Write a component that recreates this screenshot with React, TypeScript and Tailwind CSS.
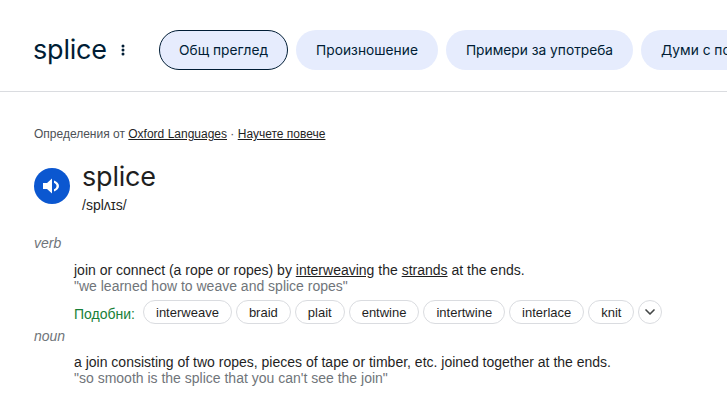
import { ChevronDown } from "lucide-react";

const tabs = ["Общ преглед", "Произношение", "Примери за употреба", "Думи с подобно значение"];
const synonyms = ["interweave", "braid", "plait", "entwine", "intertwine", "interlace", "knit"];

export default function App() {
  return (
    <div className="h-[408px] w-[727px] overflow-hidden bg-white font-['Liberation_Sans',sans-serif] text-[14px] text-[#1f1f1f]">
      {/* Header */}
      <div className="flex h-[92px] items-start border-b border-[#dadce0] pt-[30px] pl-[34px]">
        <div className="-ml-px flex h-10 w-[73px] shrink-0 items-center font-['Inter',sans-serif] text-[27px] tracking-[-0.2px] text-[#001d35]">
          splice
        </div>
        <div className="flex h-10 w-[53px] shrink-0 items-center pl-[15px]">
          <svg width="4" height="12" viewBox="0 0 4 12" fill="#001d35">
            <circle cx="2" cy="2" r="1.5" />
            <circle cx="2" cy="6" r="1.5" />
            <circle cx="2" cy="10" r="1.5" />
          </svg>
        </div>
        <div className="flex shrink-0 gap-2">
          {tabs.map((tab, i) => (
            <div
              key={tab}
              className={`flex h-10 items-center whitespace-nowrap rounded-[20px] bg-[#e6ecfd] font-['Inter',sans-serif] text-[13.75px] text-[#001d35] ${
                i === 0 ? "border border-[#001d35] px-[19px]" : "px-5"
              }`}
            >
              {tab}
            </div>
          ))}
        </div>
      </div>

      {/* Content */}
      <div className="pl-[34px]">
        <div className="mt-[34px] text-[12px] leading-4 text-[#4d5156]">
          Определения от <span className="text-[#1f1f1f] underline">Oxford Languages</span> ·{" "}
          <span className="text-[#1f1f1f] underline">Научете повече</span>
        </div>

        <div className="mt-[17px] flex">
          <div className="mt-[9px] flex h-9 w-9 items-center justify-center rounded-full bg-[#0b57d0]">
            <svg width="24" height="24" viewBox="0 0 24 24" fill="white">
              <path d="M3 9v6h4l5 4.500V4.500L7 9H3z" />
              <path d="M14 6.500c2.900 1 5 3 5 5.500s-2.100 4.500-5 5.500v-2.200c1.600-.8 2.500-1.800 2.500-3.300s-.9-2.500-2.500-3.300z" />
            </svg>
          </div>
          <div className="ml-3">
            <div className="h-9 font-['Inter',sans-serif] text-[27px] leading-9 tracking-[-0.2px]">splice</div>
            <div className="leading-5">/splʌɪs/</div>
          </div>
        </div>

        <div className="mt-5 leading-4 text-[#70757a] italic">verb</div>

        <div className="mt-[11px] pl-10">
          <div className="leading-4">
            join or connect (a rope or ropes) by <span className="underline">interweaving</span> the{" "}
            <span className="underline">strands</span> at the ends.
          </div>
          <div className="leading-4 text-[#70757a]">"we learned how to weave and splice ropes"</div>
          <div className="mt-[6px] flex items-center">
            <span className="w-[69px] shrink-0 pt-1 leading-5 text-[#188038]">Подобни:</span>
            <div className="flex gap-1">
              {synonyms.map((word) => (
                <div
                  key={word}
                  className="flex h-6 items-center rounded-full border border-[#dadce0] px-3 pt-px text-[13px] text-[#1f1f1f]"
                >
                  {word}
                </div>
              ))}
              <div className="flex h-6 w-6 items-center justify-center rounded-full border border-[#dadce0] text-[#444746]">
                <ChevronDown size={16} strokeWidth={2.5} />
              </div>
            </div>
          </div>
        </div>

        <div className="mt-[4px] leading-4 text-[#70757a] italic">noun</div>

        <div className="mt-[10px] pl-10">
          <div className="leading-4">a join consisting of two ropes, pieces of tape or timber, etc. joined together at the ends.</div>
          <div className="leading-4 text-[#70757a]">"so smooth is the splice that you can't see the join"</div>
        </div>
      </div>
    </div>
  );
}
